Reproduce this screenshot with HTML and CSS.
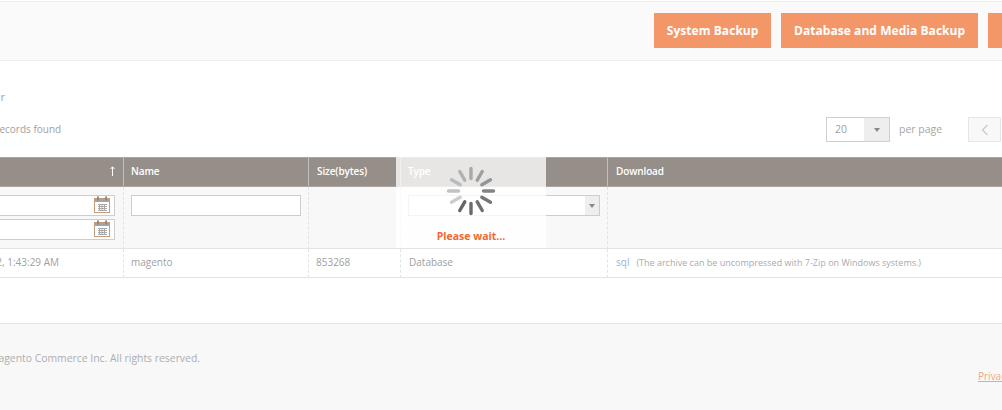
FILE: index.html
```html
<!DOCTYPE html>
<html lang="en">
<head>
<meta charset="utf-8">
<title>Backups</title>
<link rel="stylesheet" href="styles.css">
</head>
<body>
<div class="page">
  <div class="toolbar">
    <a class="btn">System Backup</a>
    <a class="btn">Database and Media Backup</a>
    <a class="btn btn-last">Database Backup</a>
  </div>
  <div class="content">
    <a class="top-link">Scheduled Backup Order</a>
    <div class="grid-actions">
      <span class="records">1 records found</span>
      <span class="per-select"><span class="per-value">20</span><span class="per-arrow"><i class="caret"></i></span></span>
      <span class="per-label">per page</span>
      <span class="pager-prev"><svg width="8" height="12" viewBox="0 0 8 12"><path d="M6.5 1 1.5 6l5 5" fill="none" stroke="#c9c9c9" stroke-width="1.2"/></svg></span>
    </div>
    <div class="table-wrap">
      <table class="grid">
        <colgroup><col class="c-time"><col class="c-name"><col class="c-size"><col class="c-type"><col class="c-dl"></colgroup>
        <thead>
          <tr class="head">
            <th class="th-time">Time<svg class="sort" width="5" height="10" viewBox="0 0 5 10"><path d="M2.5 10V1M.5 3 2.5 .8 4.5 3" fill="none" stroke="#fff" stroke-width="1"/></svg></th>
            <th>Name</th>
            <th class="th-size">Size(bytes)</th>
            <th>Type</th>
            <th class="th-dl">Download</th>
          </tr>
          <tr class="filters">
            <td>
              <div class="date-field"><svg class="cal" viewBox="0 0 16 17"><use href="#calendar"/></svg></div>
              <div class="date-field"><svg class="cal" viewBox="0 0 16 17"><use href="#calendar"/></svg></div>
            </td>
            <td><div class="text-field"></div></td>
            <td></td>
            <td><div class="select-field"><span class="select-arrow"><i class="caret"></i></span></div></td>
            <td></td>
          </tr>
        </thead>
        <tbody>
          <tr class="row">
            <td class="t-time">Jan 2, 2022, 1:43:29 AM</td>
            <td>magento</td>
            <td>853268</td>
            <td class="t-type">Database</td>
            <td class="t-dl"><a class="link sql">sql</a><span class="note">(The archive can be uncompressed with <a class="link">7-Zip</a> on Windows systems.)</span></td>
          </tr>
        </tbody>
      </table>
      <div class="loader">
        <svg class="spinner" width="50" height="50" viewBox="-25 -25 50 50">
          <g stroke-width="3.4" stroke-linecap="round" fill="none">
            <path d="M0-22.5V-12.5" stroke="#a9a9a9"/>
            <path d="M0-22.5V-12.5" stroke="#9f9f9f" transform="rotate(30)"/>
            <path d="M0-22.5V-12.5" stroke="#959595" transform="rotate(60)"/>
            <path d="M0-22.5V-12.5" stroke="#848484" transform="rotate(90)"/>
            <path d="M0-22.5V-12.5" stroke="#757575" transform="rotate(120)"/>
            <path d="M0-22.5V-12.5" stroke="#6f6f6f" transform="rotate(150)"/>
            <path d="M0-22.5V-12.5" stroke="#6a6a6a" transform="rotate(180)"/>
            <path d="M0-22.5V-12.5" stroke="#666666" transform="rotate(210)"/>
            <path d="M0-22.5V-12.5" stroke="#cdcdcd" transform="rotate(240)"/>
            <path d="M0-22.5V-12.5" stroke="#c2c2c2" transform="rotate(270)"/>
            <path d="M0-22.5V-12.5" stroke="#bbbbbb" transform="rotate(300)"/>
            <path d="M0-22.5V-12.5" stroke="#b2b2b2" transform="rotate(330)"/>
          </g>
        </svg>
        <div class="wait">Please wait...</div>
      </div>
    </div>
  </div>
  <div class="footer">
    <span class="copy">Copyright © 2022 Magento Commerce Inc. All rights reserved.</span>
    <a class="privacy">Privacy Policy</a>
  </div>
</div>
<svg class="defs" width="0" height="0">
  <symbol id="calendar" viewBox="0 0 16 17">
    <rect x="0.5" y="2.5" width="15" height="14" fill="#fff" stroke="#c79a78"/>
    <rect x="1" y="3" width="14" height="3" fill="#a5a5a5"/>
    <rect x="3" y="0.5" width="2" height="4" fill="#8a8a8a"/>
    <rect x="11" y="0.5" width="2" height="4" fill="#8a8a8a"/>
    <path d="M4 8.5h9M4 10.5h9M4 12.5h9M4 14.5h9M5.5 8v7M8 8v7M10.5 8v7" stroke="#a8a8a8" stroke-width="1" fill="none"/>
  </symbol>
</svg>
</body>
</html>
```
FILE: styles.css
```css
html, body {
  margin: 0;
  padding: 0;
  height: 410px;
  overflow: hidden;
  background: #fff;
}
body {
  font-family: "Open Sans", sans-serif;
  font-size: 10px;
  color: #8f8f8f;
}
.page {
  width: 1500px;
  margin-left: -200px;
  height: 410px;
  display: flex;
  flex-direction: column;
}
.defs { display: block; height: 0; }
.toolbar {
  margin-top: 1px;
  height: 57px;
  padding-bottom: 1px;
  box-sizing: content-box;
  background: #fafafa;
  border-top: 1px solid #eeeeee;
  border-bottom: 1px solid #eeeeee;
  padding-left: 854px;
  display: flex;
  align-items: center;
  gap: 10px;
}
.btn {
  height: 35px;
  line-height: 35px;
  padding: 0 12.8px;
  background: #f49768;
  color: #fff;
  font-weight: 700;
  font-size: 12px;
  letter-spacing: 0.05px;
  white-space: nowrap;
}
.btn-last { padding-left: 14px; }
.content { flex: none; }
.top-link {
  display: block;
  margin-top: 28px;
  height: 16px;
  line-height: 16px;
  font-size: 11px;
  color: #8fa8c8;
  text-align: right;
  width: 205px;
  white-space: nowrap;
}
.grid-actions {
  margin-top: 12px;
  height: 25px;
  display: flex;
  align-items: center;
  padding-left: 187px;
}
.records {
  width: 839px;
  white-space: nowrap;
  color: #a0a0a0;
  padding-bottom: 2px;
}
.per-select {
  box-sizing: border-box;
  width: 64px;
  height: 25px;
  border: 1px solid #cfcfcf;
  display: flex;
  background: #fff;
}
.per-value { flex: 1; padding-left: 8px; line-height: 23px; color: #a0a0a0; font-size: 10.5px; }
.per-arrow {
  width: 25px;
  background: #eeeeee;
  display: flex;
  align-items: center;
  justify-content: center;
}
.caret {
  display: block;
  width: 0;
  height: 0;
  border-left: 3px solid transparent;
  border-right: 3px solid transparent;
  border-top: 4px solid #8d8781;
}
.per-label { margin-left: 9px; width: 69px; color: #a6a6a6; white-space: nowrap; font-size: 10.5px; padding-bottom: 1px; }
.pager-prev {
  box-sizing: border-box;
  width: 33px;
  height: 25px;
  background: #f8f8f8;
  border: 1px solid #e6e6e6;
  display: flex;
  align-items: center;
  justify-content: center;
}
.table-wrap {
  position: relative;
  margin-top: 15px;
}
.grid {
  border-collapse: separate;
  border-spacing: 0;
  table-layout: fixed;
  width: 1500px;
}
.c-time { width: 324px; }
.c-name { width: 185px; }
.c-size { width: 92px; }
.c-type { width: 207px; }
.c-dl { width: 692px; }
.head th {
  box-sizing: border-box;
  height: 30px;
  padding: 0 0 3px 7px;
  background: #968f89;
  border-top: 1px solid #aaa5a0;
  border-bottom: 1px solid #aaa5a0;
  border-right: 1px solid #c2bebb;
  color: #fff;
  font-weight: 600;
  font-size: 10px;
  letter-spacing: -0.12px;
  text-align: left;
}
.head .th-size, .head .th-dl { padding-left: 8px; }
.th-time { position: relative; }
.sort { position: absolute; right: 8px; top: 8px; }
.filters td {
  box-sizing: border-box;
  height: 62px;
  background: #f8f8f8;
  vertical-align: top;
  padding: 8px 7px 0;
  border-right: 1px dashed #e3e3e3;
  border-bottom: 1px solid #e3e3e3;
}
.filters td:first-child { padding-right: 8px; }
.date-field, .text-field, .select-field {
  box-sizing: border-box;
  height: 21px;
  background: #fff;
  border: 1px solid #cdcdcd;
}
.date-field { margin-bottom: 3px; position: relative; }
.cal { position: absolute; right: 4px; top: 0; width: 16px; height: 17px; }
.select-field { display: flex; justify-content: flex-end; }
.select-arrow {
  width: 14px;
  background: #eeeeee;
  display: flex;
  align-items: center;
  justify-content: center;
}
.row td {
  box-sizing: border-box;
  height: 29px;
  padding: 0 0 3px 7px;
  border-right: 1px dashed #e3e3e3;
  border-bottom: 1px solid #e3e3e3;
  color: #a0a0a0;
  font-size: 10px;
  white-space: nowrap;
}
.row .t-time { text-align: right; padding-right: 64px; }
.row .t-type, .row .t-dl { padding-left: 8px; }
.link { color: #9db3cf; }
.sql { font-size: 10px; }
.note { font-size: 9px; margin-left: 7px; color: #aaaaaa; }
.loader {
  position: absolute;
  left: 596px;
  top: 0;
  width: 150px;
  height: 91px;
  background: rgba(255, 255, 255, 0.78);
  display: flex;
  flex-direction: column;
  align-items: center;
}
.spinner { margin-top: 9px; }
.wait {
  margin-top: 12px;
  color: #f1692f;
  font-weight: 700;
  font-size: 10.5px;
  line-height: 16px;
}
.footer {
  margin-top: 45px;
  flex: 1;
  background: #f8f8f8;
  border-top: 1px solid #e6e6e6;
}
.copy {
  display: block;
  margin-top: 26px;
  width: 400px;
  line-height: 16px;
  font-size: 10.4px;
  text-align: right;
  white-space: nowrap;
  color: #aeaeae;
}
.privacy {
  display: block;
  margin-top: 2px;
  margin-left: 1178px;
  line-height: 16px;
  color: #f2a582;
  text-decoration: underline;
  white-space: nowrap;
}
```
